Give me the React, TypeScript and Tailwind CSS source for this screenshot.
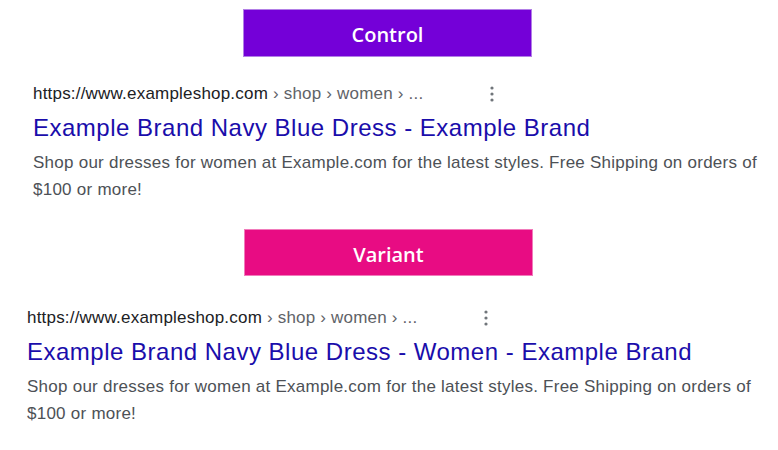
import React from 'react';

interface ResultProps {
  title: string;
  indent: string;
}

const Kebab: React.FC<{ className?: string }> = ({ className }) => (
  <svg width="4" height="16" viewBox="0 0 4 16" className={className}>
    <circle cx="2" cy="2" r="1.6" fill="#70757a" />
    <circle cx="2" cy="8" r="1.6" fill="#70757a" />
    <circle cx="2" cy="14" r="1.6" fill="#70757a" />
  </svg>
);

const SearchResult: React.FC<ResultProps> = ({ title, indent }) => (
  <div className={`flex flex-col ${indent}`} style={{ fontFamily: '"Liberation Sans", Arial, sans-serif' }}>
    <div className="relative flex items-center h-[20px] text-[17px] leading-[20px] tracking-[0.2px]">
      <span className="text-[#202124]">https://www.exampleshop.com</span>
      <span className="text-[#5f6368]">&nbsp;› shop › women › ...</span>
      <Kebab className="absolute top-[2px] left-[457px]" />
    </div>
    <div className="mt-[9px] text-[24px] leading-[30px] tracking-[0.5px] text-[#1a0dab] whitespace-nowrap">{title}</div>
    <p className="mt-[6px] text-[17px] leading-[27px] tracking-[0.25px] text-[#4d5156] w-[740px]">
      Shop our dresses for women at Example.com for the latest styles. Free Shipping on orders of $100 or more!
    </p>
  </div>
);

export default function App() {
  return (
    <div className="w-[778px] h-[450px] bg-white flex flex-col pt-[9px]">
      <div
        className="ml-[243px] w-[289px] h-[48px] pt-[3px] bg-[#7400d8] border border-[#b27fe6] flex items-center justify-center text-white text-[20px] font-semibold"
        style={{ fontFamily: '"Open Sans", sans-serif' }}
      >
        Control
      </div>
      <div className="mt-[27px]">
        <SearchResult title="Example Brand Navy Blue Dress - Example Brand" indent="pl-[33px]" />
      </div>
      <div
        className="mt-[26px] ml-[244px] w-[289px] h-[47px] pt-[4px] bg-[#e80c83] border border-[#f17bbb] flex items-center justify-center text-white text-[20px] font-semibold"
        style={{ fontFamily: '"Open Sans", sans-serif' }}
      >
        Variant
      </div>
      <div className="mt-[32px]">
        <SearchResult title="Example Brand Navy Blue Dress - Women - Example Brand" indent="pl-[27px]" />
      </div>
    </div>
  );
}
